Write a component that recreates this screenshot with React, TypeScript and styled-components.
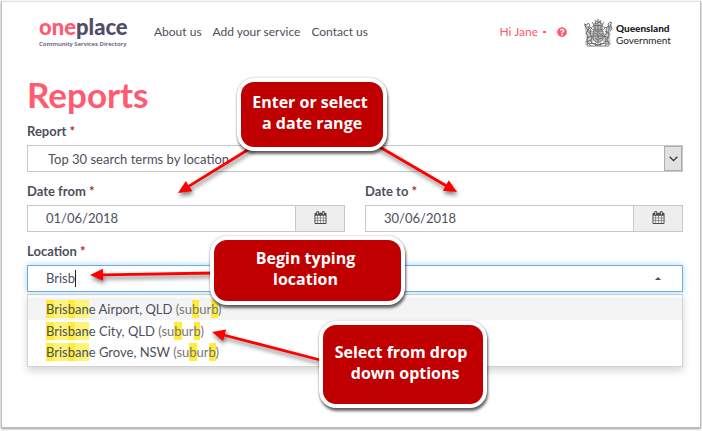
import React, { useState } from "react";
import styled, { createGlobalStyle, css } from "styled-components";
import { FaQuestionCircle } from "react-icons/fa";

const ink = "#4d4f5c";
const coral = "#ff5a70";
const line = "#c8c8c8";

const GlobalStyle = createGlobalStyle`
  * { box-sizing: border-box; }
  body {
    margin: 0;
    background: #fff;
    color: ${ink};
    font: 13px/18px Lato, "Open Sans", sans-serif;
  }
  input, select, button { font: inherit; color: inherit; }
`;

const Page = styled.div`
  position: relative;
  min-height: 100vh;
  padding: 1px 1px 3px;
  display: flex;
`;

const Frame = styled.div`
  flex: 1;
  border: 1px solid #bdbdbd;
  border-top-color: #dedede;
  box-shadow: 0 1px 2px #999;
`;

const Header = styled.header`
  display: flex;
  align-items: center;
  height: 60px;
  padding: 0 30px 0 37px;
  font-size: 12px;
`;

const Brand = styled.a`
  color: #504d68;
  text-decoration: none;
  width: 115px;
  padding-bottom: 2px;
`;

const BrandName = styled.strong`
  display: block;
  font-size: 22px;
  line-height: 26px;
  font-weight: 900;
  span { color: ${coral}; }
`;

const Tagline = styled.span`
  display: block;
  font: 600 6px/9px "Open Sans", sans-serif;
  white-space: nowrap;
`;

const Nav = styled.nav`
  display: flex;
  flex: 1;
  gap: 11px;
  white-space: nowrap;
`;

const NavLink = styled.a`
  color: ${ink};
  text-decoration: none;
`;

const Account = styled.div`
  display: flex;
  align-items: center;
  gap: 11px;
  color: ${coral};
  margin-right: 16px;
`;

const PlainButton = styled.button`
  display: flex;
  align-items: center;
  gap: 5px;
  padding: 0;
  border: 0;
  background: none;
  white-space: nowrap;
`;

const Dot = styled.span`
  width: 3px;
  height: 2px;
  background: ${coral};
`;

const Government = styled.div`
  display: flex;
  align-items: center;
  gap: 3px;
  color: #222;
  font-size: 10px;
  line-height: 12px;
`;

const GovernmentName = styled.div`
  width: 54px;
  padding-top: 4px;
  strong { display: block; font-weight: 900; }
`;

const Main = styled.main`
  padding: 8px 17px 0 25px;
`;

const Title = styled.h1`
  margin: 0;
  color: ${coral};
  font-size: 35px;
  line-height: 48px;
`;

const Form = styled.form`
  display: grid;
  grid-template-columns: 1fr 1fr;
  column-gap: 20px;
  row-gap: 6px;
`;

const Field = styled.div<{ $wide?: boolean }>`
  ${(p) => p.$wide && css`grid-column: 1 / -1;`}
`;

const Label = styled.label`
  display: block;
  height: 27px;
  padding-top: 3px;
  line-height: 20px;
  font-weight: 700;
  span { color: #b02a37; }
`;

const Control = styled.div<{ $focused?: boolean }>`
  position: relative;
  display: flex;
  height: 27px;
  border: 1px solid ${line};
  background: #fff;
  ${(p) =>
    p.$focused &&
    css`
      border-color: #66afe9;
      box-shadow: 0 0 6px rgba(102, 175, 233, 0.55);
    `}
`;

const Select = styled.select`
  flex: 1;
  min-width: 0;
  padding: 0 20px;
  border: 0;
  outline: 0;
  background: none;
  appearance: none;
`;

const SelectArrow = styled.span`
  display: flex;
  align-items: center;
  justify-content: center;
  width: 18px;
  border: 1px solid #adadad;
  background: #e1e1e1;
  pointer-events: none;
`;

const TextInput = styled.input`
  flex: 1;
  min-width: 0;
  padding: 0 18px 2px;
  border: 0;
  outline: 0;
  background: none;
`;

const ComboInput = styled.input`
  field-sizing: content;
  padding: 0 0 2px;
  margin-left: 18px;
  border: 0;
  outline: 0;
  background: none;
  caret-color: transparent;
`;

const Caret = styled.span`
  align-self: center;
  width: 1px;
  height: 17px;
  background: #222;
`;

const ToggleButton = styled.button`
  display: flex;
  align-items: center;
  margin-left: auto;
  padding: 0 21px;
  border: 0;
  background: none;
`;

const CalendarButton = styled.button`
  display: flex;
  align-items: center;
  justify-content: center;
  width: 49px;
  padding: 0 0 2px;
  border: 0;
  border-left: 1px solid ${line};
  background: #eee;
`;

const Menu = styled.ul`
  list-style: none;
  margin: 2px 0 0;
  padding: 3px 0 4px;
  border: 1px solid #d3d3d3;
  background: #fff;
  box-shadow: 0 4px 8px rgba(0, 0, 0, 0.16);
`;

const Option = styled.li<{ $active?: boolean }>`
  height: ${(p) => (p.$active ? 22 : 21)}px;
  padding: 0 18px;
  line-height: 22px;
  background: ${(p) => (p.$active ? "#f4f4f4" : "transparent")};
`;

const Mark = styled.mark<{ $strong?: boolean }>`
  padding: 1px 0;
  color: inherit;
  background: ${(p) => (p.$strong ? "#ffec3a" : "#fff47a")};
`;

const Muted = styled.span`
  color: #777;
`;

const Arrows = styled.svg`
  position: absolute;
  left: 0;
  top: 0;
  pointer-events: none;
  filter: drop-shadow(1px 3px 2px rgba(0, 0, 0, 0.5));
`;

const Callout = styled.div<{ $x: number; $y: number; $w: number; $h: number }>`
  position: absolute;
  left: ${(p) => p.$x}px;
  top: ${(p) => p.$y}px;
  width: ${(p) => p.$w}px;
  height: ${(p) => p.$h}px;
  display: flex;
  align-items: center;
  justify-content: center;
  padding: 0 4px 3px 0;
  border: 4px solid #fff;
  border-radius: 17px;
  background: #c00000;
  box-shadow: 1px 3px 3px rgba(0, 0, 0, 0.6), 0 0 2px rgba(0, 0, 0, 0.35);
  color: #fff;
  font: 700 16px/21px "Open Sans", "Noto Sans", sans-serif;
  text-align: center;
  white-space: pre;
`;

const Crest = () => (
  <svg width="30" height="29" viewBox="0 0 30 29" fill="none" stroke="#555" strokeWidth="0.8" aria-hidden="true">
    <path d="M10 13h10v7c0 3-3 4-5 5-2-1-5-2-5-5zM10 8h10v4H10z" fill="#bbb" stroke="none" />
    <path d="M1 5l4 3 1 6 4 1v9l-8 3 1-8zM29 5l-4 3-1 6-4 1v9l8 3-1-8z" fill="#ccc" stroke="none" />
    <path d="M9 4l2 3M12 2l1 4M15 .7v5M18 2l-1 4M21 4l-2 3M10 7h10M11 5l3 1 2-2 3 2M13 3l2 1 2-1" />
    <path d="M10 8c-2 1-2 3 0 4h10c2-1 2-3 0-4-3-1-7-1-10 0zM12 8v4M15 7v5M18 8v4M7 9l2 2M23 9l-2 2" />
    <path d="M10 13h10v7c0 3-3 4-5 5-2-1-5-2-5-5zM15 13v11M10 18h10M11 15l3 1M16 15l3 2M12 20l2 2M16 21l3-1" />
    <path d="M1 6l3 1 1-2 2 2-1 3 2 2-1 4 2 3-1 4 1 3M2 7l1 3 2 2-2 3 2 3-1 4 1 4M5 8l1 5 3 1M4 13l4 3M4 20l5-2M3 24l5-2" />
    <path d="M29 5l-2-1-2 2 1 3-3 2 1 4-3 3 2 3-1 4M28 5l-1 4-2 4 1 4-2 4 2 5M26 7l-3 3M22 13l4 3M21 18l5 2M22 23l4 1M28 8l1 3-2 2" />
    <path d="M3 27c4-2 7-2 12 0 4-2 8-2 12 0M4 28h22M9 25l6 2 6-2M6 26l2 2M12 25l1 3M18 25l-1 3M23 26l-1 2" />
  </svg>
);

const CalendarIcon = () => (
  <svg width="13" height="13" viewBox="0 0 1792 1792" fill="#4b4b4b" aria-hidden="true">
    <path d="M192 1664h288v-288h-288v288zm352 0h320v-288h-320v288zm-352-352h288v-320h-288v320zm352 0h320v-320h-320v320zm-352-384h288v-288h-288v288zm736 736h320v-288h-320v288zm-384-736h320v-288h-320v288zm768 736h288v-288h-288v288zm-384-352h320v-320h-320v320zm-352-864v-288q0-13-9.5-22.5t-22.5-9.5h-64q-13 0-22.5 9.5t-9.5 22.5v288q0 13 9.5 22.5t22.5 9.5h64q13 0 22.5-9.5t9.5-22.5zm736 864h288v-320h-288v320zm-384-384h320v-288h-320v288zm384 0h288v-288h-288v288zm32-480v-288q0-13-9.5-22.5t-22.5-9.5h-64q-13 0-22.5 9.5t-9.5 22.5v288q0 13 9.5 22.5t22.5 9.5h64q13 0 22.5-9.5t9.5-22.5zm384-64v1280q0 52-38 90t-90 38h-1408q-52 0-90-38t-38-90v-1280q0-52 38-90t90-38h128v-96q0-66 47-113t113-47h64q66 0 113 47t47 113v96h384v-96q0-66 47-113t113-47h64q66 0 113 47t47 113v96h128q52 0 90 38t38 90z" />
  </svg>
);

const Required = () => <span aria-hidden="true">*</span>;

function DateField({ id, label, initial }: { id: string; label: string; initial: string }) {
  const [value, setValue] = useState(initial);
  return (
    <Field>
      <Label htmlFor={id}>{label} <Required /></Label>
      <Control>
        <TextInput id={id} value={value} onChange={(e) => setValue(e.target.value)} required />
        <CalendarButton type="button" aria-label={`Choose ${label.toLowerCase()}`}>
          <CalendarIcon />
        </CalendarButton>
      </Control>
    </Field>
  );
}

const places = ["e Airport, QLD", "e City, QLD", "e Grove, NSW"];

const arrows = [
  { from: [254, 146], to: [178, 193] },
  { from: [378, 146], to: [457, 192] },
  { from: [214, 273], to: [90, 275] },
  { from: [324, 361], to: [212, 332] },
];

function Arrow({ from, to }: { from: number[]; to: number[] }) {
  const length = Math.hypot(to[0] - from[0], to[1] - from[1]);
  const angle = (Math.atan2(to[1] - from[1], to[0] - from[0]) * 180) / Math.PI;
  return (
    <g transform={`translate(${from[0]} ${from[1]}) rotate(${angle})`}>
      <path d={`M0 -1.4H${length - 13}V-6L${length} 0L${length - 13} 6V1.4H0Z`} />
    </g>
  );
}

export default function App() {
  const [location, setLocation] = useState("Brisb");
  return (
    <Page>
      <GlobalStyle />
      <Frame>
        <Header>
          <Brand href="#home">
            <BrandName><span>one</span>place</BrandName>
            <Tagline>Community Services Directory</Tagline>
          </Brand>
          <Nav>
            <NavLink href="#about">About us</NavLink>
            <NavLink href="#add">Add your service</NavLink>
            <NavLink href="#contact">Contact us</NavLink>
          </Nav>
          <Account>
            <PlainButton type="button">Hi Jane <Dot /></PlainButton>
            <PlainButton type="button" aria-label="Help"><FaQuestionCircle size={10} /></PlainButton>
          </Account>
          <Government>
            <Crest />
            <GovernmentName><strong>Queensland</strong>Government</GovernmentName>
          </Government>
        </Header>
        <Main>
          <Title>Reports</Title>
          <Form>
            <Field $wide>
              <Label htmlFor="report">Report <Required /></Label>
              <Control>
                <Select id="report">
                  <option>Top 30 search terms by location</option>
                </Select>
                <SelectArrow>
                  <svg width="9" height="6" viewBox="0 0 9 6" fill="none" stroke="#333" strokeWidth="1.3">
                    <path d="M.7 .8L4.5 4.6L8.3 .8" />
                  </svg>
                </SelectArrow>
              </Control>
            </Field>
            <DateField id="from" label="Date from" initial="01/06/2018" />
            <DateField id="to" label="Date to" initial="30/06/2018" />
            <Field $wide>
              <Label htmlFor="location">Location <Required /></Label>
              <Control $focused>
                <ComboInput
                  id="location"
                  role="combobox"
                  aria-expanded="true"
                  aria-controls="places"
                  value={location}
                  onChange={(e) => setLocation(e.target.value)}
                />
                <Caret />
                <ToggleButton type="button" aria-label="Toggle locations">
                  <svg width="6" height="3" viewBox="0 0 6 3"><path d="M0 3L3 0L6 3Z" fill={ink} /></svg>
                </ToggleButton>
              </Control>
              <Menu id="places" role="listbox">
                {places.map((place, i) => (
                  <Option key={place} role="option" aria-selected={i === 0} $active={i === 0}>
                    <Mark $strong>B</Mark><Mark>ris</Mark><Mark $strong>b</Mark><Mark>an</Mark>{place}{" "}
                    <Muted>(su<Mark $strong>b</Mark>ur<Mark $strong>b</Mark>)</Muted>
                  </Option>
                ))}
              </Menu>
            </Field>
          </Form>
        </Main>
      </Frame>
      <Arrows width="702" height="431" fill="#f00" aria-hidden="true">
        {arrows.map((a, i) => <Arrow key={i} {...a} />)}
      </Arrows>
      <Callout $x={237} $y={78} $w={150} $h={73}>{"Enter or select\n a date range"}</Callout>
      <Callout $x={210} $y={236} $w={195} $h={69}>{"Begin typing\nlocation"}</Callout>
      <Callout $x={319} $y={321} $w={168} $h={87}>{"Select from drop\n  down options"}</Callout>
    </Page>
  );
}
